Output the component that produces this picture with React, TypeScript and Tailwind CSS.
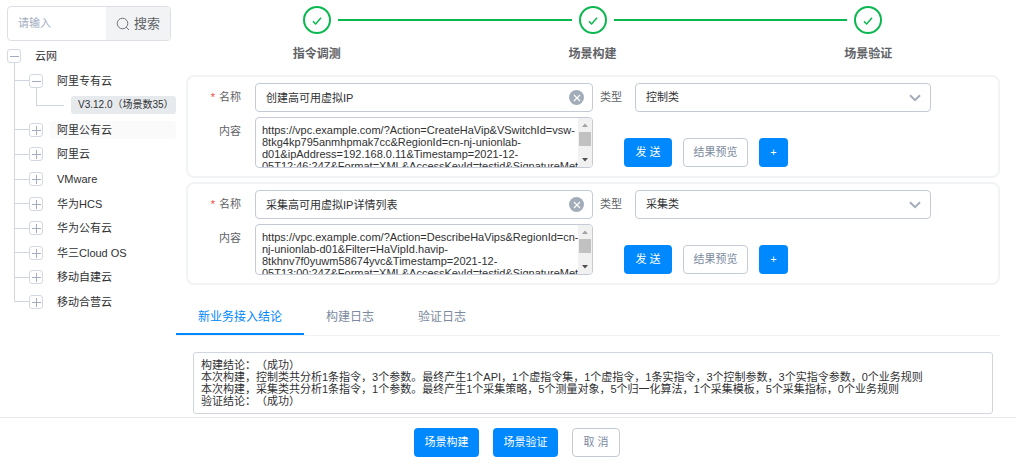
import { useState } from 'react';
import clsx from 'clsx';

type TreeNode = {
  label: string;
  level: 0 | 1 | 2;
  open?: boolean;
  last?: boolean;
  state?: 'selected' | 'hover';
};

type Command = {
  id: string;
  name: string;
  type: string;
  content: string;
};

const TREE: TreeNode[] = [
  { label: '云网', level: 0, open: true },
  { label: '阿里专有云', level: 1, open: true },
  { label: 'V3.12.0（场景数35）', level: 2, state: 'selected' },
  { label: '阿里公有云', level: 1, state: 'hover' },
  { label: '阿里云', level: 1 },
  { label: 'VMware', level: 1 },
  { label: '华为HCS', level: 1 },
  { label: '华为公有云', level: 1 },
  { label: '华三Cloud OS', level: 1 },
  { label: '移动自建云', level: 1 },
  { label: '移动合营云', level: 1, last: true },
];

const STEPS = ['指令调测', '场景构建', '场景验证'];
const TABS = ['新业务接入结论', '构建日志', '验证日志'];

const COMMANDS: Command[] = [
  {
    id: 'create',
    name: '创建高可用虚拟IP',
    type: '控制类',
    content:
      'https://vpc.example.com/?Action=CreateHaVip&VSwitchId=vsw-8tkg4kp795anmhpmak7cc&RegionId=cn-nj-unionlab-d01&ipAddress=192.168.0.11&Timestamp=2021-12-05T12:46:24Z&Format=XML&AccessKeyId=testid&SignatureMethod=HMAC-SHA1&SignatureVersion=1.0&Version=2016-04-28',
  },
  {
    id: 'describe',
    name: '采集高可用虚拟IP详情列表',
    type: '采集类',
    content:
      'https://vpc.example.com/?Action=DescribeHaVips&RegionId=cn-nj-unionlab-d01&Filter=HaVipId.havip-8tkhnv7f0yuwm58674yvc&Timestamp=2021-12-05T13:00:24Z&Format=XML&AccessKeyId=testid&SignatureMethod=HMAC-SHA1&SignatureVersion=1.0&Version=2016-04-28',
  },
];

const RESULT = `构建结论：（成功）
本次构建，控制类共分析1条指令，3个参数。最终产生1个API，1个虚指令集，1个虚指令，1条实指令，3个控制参数，3个实指令参数，0个业务规则
本次构建，采集类共分析1条指令，1个参数。最终产生1个采集策略，5个测量对象，5个归一化算法，1个采集模板，5个采集指标，0个业务规则
验证结论：（成功）`;

const primaryBtn = 'h-[29px] rounded bg-[#0088ff] text-white';
const plainBtn = 'h-[29px] rounded border border-[#c5cbd6] bg-white text-[#7c8aa0]';

function Toggle({ open }: { open?: boolean }) {
  return (
    <button
      aria-label={open ? '收起' : '展开'}
      className="flex size-3.5 shrink-0 items-center justify-center rounded-[3px] border border-[#d3d8e2] bg-white"
    >
      <svg viewBox="0 0 10 10" className="size-2.5 shrink-0" stroke="#a3adbf" shapeRendering="crispEdges">
        <path d="M0.5 5.5H9.5" />
        {!open && <path d="M5.5 1V10" />}
      </svg>
    </button>
  );
}

// the box with, when it is open, the start of the line down to its children
function ToggleColumn({ open }: { open?: boolean }) {
  return (
    <div className="flex h-full w-3.5 flex-col">
      <div className="flex-1" />
      <Toggle open={open} />
      <div className={clsx('ml-[7px] flex-1', open && 'border-l border-[#d0d6e0]')} />
    </div>
  );
}

function TreeRow({ node }: { node: TreeNode }) {
  return (
    <li className="flex flex-1 items-center">
      {node.level === 1 && (
        <div className="ml-[7px] flex h-full w-[15px] flex-col">
          <div className="flex-1 border-b border-l border-[#d0d6e0]" />
          <div className={clsx('flex-1', !node.last && 'border-l border-[#d0d6e0]')} />
        </div>
      )}
      {node.level === 2 && (
        <>
          <div className="ml-[7px] h-full w-[22px] shrink-0 border-l border-[#d0d6e0]" />
          <div className="flex h-full w-7 shrink-0 flex-col">
            <div className="flex-1 border-b border-l border-[#d0d6e0]" />
            <div className="flex-1" />
          </div>
        </>
      )}
      {node.level < 2 && <ToggleColumn open={node.open} />}
      <span
        className={clsx(
          'ml-[7px] h-[18px] flex-1 rounded-[3px] pl-[7px] leading-[18px] whitespace-nowrap',
          node.state === 'selected' && 'bg-[#e7eaed] text-[10px]',
          node.state === 'hover' && 'bg-[#fafafa]',
        )}
      >
        {node.label}
      </span>
    </li>
  );
}

function Sidebar() {
  return (
    <aside className="w-44 shrink-0 pt-1.5 pl-[7px]">
      <div className="mr-[5px] flex h-[35px] overflow-hidden rounded border border-[#dcdfe6]">
        <input
          aria-label="搜索关键字"
          placeholder="请输入"
          className="w-0 flex-1 px-2.5 outline-none placeholder:text-[#a3adbf]"
        />
        <button className="flex w-16 items-center justify-center gap-1 bg-[#f2f3f5] text-[13px] text-[#606266]">
          <svg viewBox="0 0 14 14" className="size-3.5" fill="none" stroke="#707277">
            <circle cx="6.5" cy="6.5" r="5.3" />
            <path d="M10.3 10.3L13 13" />
          </svg>
          搜索
        </button>
      </div>
      <ul className="mt-[3px] flex h-[270px] flex-col">
        {TREE.map((node) => (
          <TreeRow key={node.label} node={node} />
        ))}
      </ul>
    </aside>
  );
}

function Steps() {
  return (
    <ol className="flex pt-1.5 pr-2.5 pl-[3px]">
      {STEPS.map((step, i) => (
        <li key={step} className="flex flex-1 flex-col items-center">
          <div className="flex w-full items-center gap-[7px]">
            <div className={clsx('h-0.5 flex-1', i > 0 && 'bg-[#0bb850]')} />
            <div className="flex size-7 items-center justify-center rounded-full border-2 border-[#0bb850]">
              <svg viewBox="0 0 12 12" className="size-3" fill="none" stroke="#0bb850" strokeWidth="1.5">
                <path d="M2 7.4L4.7 10L10 3.8" />
              </svg>
            </div>
            <div className={clsx('h-0.5 flex-1', i < STEPS.length - 1 && 'bg-[#0bb850]')} />
          </div>
          <span className="mt-3 text-xs leading-4 font-bold text-[#606266]">{step}</span>
        </li>
      ))}
    </ol>
  );
}

// always-visible scrollbar laid over the right edge of a textarea
function Scrollbar() {
  return (
    <div
      aria-hidden
      className="pointer-events-none absolute inset-y-px right-px flex w-3.5 flex-col items-center rounded-r-[3px] bg-[#f1f1f1]"
    >
      <svg viewBox="0 0 14 14" className="size-3.5" fill="#a3a3a3">
        <path d="M4 9L7 5.5L10 9Z" />
      </svg>
      <div className="h-3.5 w-3 bg-[#c1c1c1]" />
      <svg viewBox="0 0 14 14" className="mt-auto size-3.5" fill="#505050">
        <path d="M4 5L7 8.5L10 5Z" />
      </svg>
    </div>
  );
}

function CommandCard({ command }: { command: Command }) {
  const [name, setName] = useState(command.name);
  const nameId = `${command.id}-name`;
  const typeId = `${command.id}-type`;
  const contentId = `${command.id}-content`;

  return (
    <section className="grid grid-cols-[67px_minmax(0,338fr)_42px_minmax(0,296fr)_67px] gap-y-[5px] rounded-lg border-2 border-[#f2f3f5] pt-1.5 pb-2">
      <label htmlFor={nameId} className="pr-3.5 text-right leading-7 text-[#606266]">
        <span className="mr-1 text-[#f5483b]">*</span>名称
      </label>
      <div className="relative">
        <input
          id={nameId}
          value={name}
          onChange={(e) => setName(e.target.value)}
          className="block h-[29px] w-full rounded border border-[#c5cbd6] pr-7 pb-0.5 pl-2.5 outline-none"
        />
        <button
          aria-label="清空"
          onClick={() => setName('')}
          className="absolute top-[7px] right-[9px] flex size-[15px] items-center justify-center rounded-full bg-[#a3adb9]"
        >
          <svg viewBox="0 0 8 8" className="size-2" stroke="#fff" strokeWidth="1.2">
            <path d="M1 1L7 7M7 1L1 7" />
          </svg>
        </button>
      </div>
      <label htmlFor={typeId} className="pl-[7px] leading-7 text-[#606266]">类型</label>
      <div className="relative">
        <select
          id={typeId}
          defaultValue={command.type}
          className="block h-[29px] w-full appearance-none rounded border border-[#c5cbd6] bg-white px-2.5 outline-none"
        >
          <option>控制类</option>
          <option>采集类</option>
        </select>
        <svg
          viewBox="0 0 12 8"
          className="pointer-events-none absolute top-[11px] right-2.5 h-2 w-3"
          fill="none"
          stroke="#a3adb9"
          strokeWidth="2"
        >
          <path d="M1 1.2L6 6.2L11 1.2" />
        </svg>
      </div>
      <div />

      <label htmlFor={contentId} className="pr-3.5 text-right leading-7 text-[#606266]">内容</label>
      <div className="relative">
        <textarea
          id={contentId}
          defaultValue={command.content}
          className="block h-[51px] w-full resize-none overflow-y-scroll rounded border border-[#c5cbd6] py-1.5 pr-[11px] pl-1.5 leading-3 outline-none"
        />
        <Scrollbar />
      </div>
      <div className="col-span-3 flex items-end gap-[11px] pb-px pl-[31px]">
        <button className={clsx(primaryBtn, 'w-12')}>发 送</button>
        <button className={clsx(plainBtn, 'w-[65px]')}>结果预览</button>
        <button className={clsx(primaryBtn, 'w-[29px]')}>+</button>
      </div>
    </section>
  );
}

export default function App() {
  const [tab, setTab] = useState(TABS[0]);

  return (
    <div className="bg-white font-['Liberation_Sans','Noto_Sans_CJK_SC',sans-serif] text-[11px] text-[#303133]">
      <div className="flex">
        <Sidebar />
        <main className="min-w-0 flex-1">
          <Steps />
          <div className="mt-[13px] mr-4 ml-2.5 flex flex-col gap-1">
            {COMMANDS.map((command) => (
              <CommandCard key={command.id} command={command} />
            ))}
          </div>
          <div role="tablist" className="mt-3.5 mr-4 flex border-b border-[#f0f1f4] text-xs">
            {TABS.map((t) => (
              <button
                key={t}
                role="tab"
                aria-selected={t === tab}
                onClick={() => setTab(t)}
                className={clsx(
                  'h-9 border-b-2 px-[22px] pt-0.5',
                  t === tab ? 'border-[#0088ff] text-[#0088ff]' : 'border-transparent text-[#7c8aa0]',
                )}
              >
                {t}
              </button>
            ))}
          </div>
          <textarea
            aria-label={tab}
            readOnly
            value={RESULT}
            className="mt-4 mr-[23px] ml-[17px] block h-[62px] w-[calc(100%-40px)] resize-none rounded-[3px] border border-[#d0d5de] px-[7px] py-1.5 leading-3 [text-spacing-trim:space-all] outline-none"
          />
        </main>
      </div>
      <footer className="mt-[3px] flex justify-center gap-3.5 border-t border-[#e6e8ec] py-2.5 pl-[18px]">
        <button className={clsx(primaryBtn, 'w-[65px]')}>场景构建</button>
        <button className={clsx(primaryBtn, 'w-[65px]')}>场景验证</button>
        <button className={clsx(plainBtn, 'w-12')}>取 消</button>
      </footer>
    </div>
  );
}
